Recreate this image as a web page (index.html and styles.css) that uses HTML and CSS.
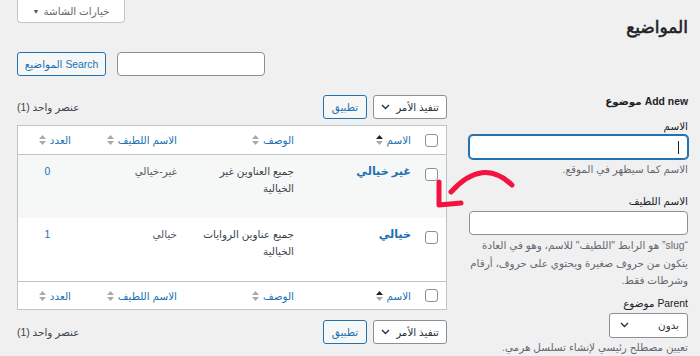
FILE: index.html
```html
<!DOCTYPE html>
<html lang="ar" dir="rtl">
<head>
<meta charset="utf-8">
<link rel="stylesheet" href="styles.css">
</head>
<body>
<div class="wrap">
  <div class="head">
    <h1 class="title">المواضيع</h1>
    <button class="screen-opt">خيارات الشاشة <span class="tri">▼</span></button>
  </div>
  <div class="search">
    <div class="input search-input"></div>
    <button class="btn search-btn">Search المواضيع</button>
  </div>
  <div class="cols">
    <div class="form-col">
      <h2 class="form-title">Add new موضوع</h2>
      <div class="label l1">الاسم</div>
      <div class="input focused"><span class="caret"></span></div>
      <p class="desc d1">الاسم كما سيظهر في الموقع.</p>
      <div class="label l2">الاسم اللطيف</div>
      <div class="input"></div>
      <p class="desc d2">“slug” هو الرابط "اللطيف" للاسم، وهو في العادة<br>يتكون من حروف صغيرة ويحتوي على حروف، أرقام<br>وشرطات فقط.</p>
      <div class="label l3">Parent موضوع</div>
      <div class="select parent-select"><span>بدون</span><svg width="9" height="6" viewBox="0 0 9 6"><path d="M1 1l3.5 3.5L8 1" fill="none" stroke="#2c3338" stroke-width="1.4"/></svg></div>
      <p class="desc d3">تعيين مصطلح رئيسي لإنشاء تسلسل هرمي.</p>
    </div>
    <div class="table-col">
      <div class="tablenav">
        <div class="select bulk"><span>تنفيذ الأمر</span><svg width="9" height="6" viewBox="0 0 9 6"><path d="M1 1l3.5 3.5L8 1" fill="none" stroke="#2c3338" stroke-width="1.4"/></svg></div>
        <button class="btn apply">تطبيق</button>
        <span class="count">عنصر واحد (1)</span>
      </div>
      <table class="list">
        <colgroup><col class="c-cb"><col class="c-name"><col class="c-desc"><col class="c-slug"><col class="c-num"></colgroup>
        <thead>
          <tr>
            <th class="cbcell"><span class="cb"></span></th>
            <th><span class="sortable">الاسم<svg class="sort" width="7" height="12" viewBox="0 0 7 12"><path d="M3.5 1L7 5H0z" fill="#1d2327"/><path d="M0 7h7l-3.5 4z" fill="#a7aaad"/></svg></span></th>
            <th><span class="sortable">الوصف<svg class="sort" width="7" height="12" viewBox="0 0 7 12"><path d="M3.5 1L7 5H0z" fill="#a7aaad"/><path d="M0 7h7l-3.5 4z" fill="#a7aaad"/></svg></span></th>
            <th><span class="sortable">الاسم اللطيف<svg class="sort" width="7" height="12" viewBox="0 0 7 12"><path d="M3.5 1L7 5H0z" fill="#a7aaad"/><path d="M0 7h7l-3.5 4z" fill="#a7aaad"/></svg></span></th>
            <th><span class="sortable">العدد<svg class="sort" width="7" height="12" viewBox="0 0 7 12"><path d="M3.5 1L7 5H0z" fill="#a7aaad"/><path d="M0 7h7l-3.5 4z" fill="#a7aaad"/></svg></span></th>
          </tr>
        </thead>
        <tbody>
          <tr class="alt">
            <td class="cbcell"><span class="cb"></span></td>
            <td><a class="row-title">غير خيالي</a></td>
            <td class="dcell">جميع العناوين غير<br>الخيالية</td>
            <td class="slug">غير-خيالي</td>
            <td class="num">0</td>
          </tr>
          <tr>
            <td class="cbcell"><span class="cb"></span></td>
            <td><a class="row-title">خيالي</a></td>
            <td class="dcell">جميع عناوين الروايات<br>الخيالية</td>
            <td class="slug">خيالي</td>
            <td class="num">1</td>
          </tr>
        </tbody>
        <tfoot>
          <tr>
            <th class="cbcell"><span class="cb"></span></th>
            <th><span class="sortable">الاسم<svg class="sort" width="7" height="12" viewBox="0 0 7 12"><path d="M3.5 1L7 5H0z" fill="#1d2327"/><path d="M0 7h7l-3.5 4z" fill="#a7aaad"/></svg></span></th>
            <th><span class="sortable">الوصف<svg class="sort" width="7" height="12" viewBox="0 0 7 12"><path d="M3.5 1L7 5H0z" fill="#a7aaad"/><path d="M0 7h7l-3.5 4z" fill="#a7aaad"/></svg></span></th>
            <th><span class="sortable">الاسم اللطيف<svg class="sort" width="7" height="12" viewBox="0 0 7 12"><path d="M3.5 1L7 5H0z" fill="#a7aaad"/><path d="M0 7h7l-3.5 4z" fill="#a7aaad"/></svg></span></th>
            <th><span class="sortable">العدد<svg class="sort" width="7" height="12" viewBox="0 0 7 12"><path d="M3.5 1L7 5H0z" fill="#a7aaad"/><path d="M0 7h7l-3.5 4z" fill="#a7aaad"/></svg></span></th>
          </tr>
        </tfoot>
      </table>
      <div class="tablenav bottom">
        <div class="select bulk"><span>تنفيذ الأمر</span><svg width="9" height="6" viewBox="0 0 9 6"><path d="M1 1l3.5 3.5L8 1" fill="none" stroke="#2c3338" stroke-width="1.4"/></svg></div>
        <button class="btn apply">تطبيق</button>
        <span class="count">عنصر واحد (1)</span>
      </div>
    </div>
  </div>
</div>
<svg class="annot" width="90" height="55" viewBox="0 0 90 55"><path d="M21 32Q52.5 -3 82 25" fill="none" stroke="#f2143f" stroke-width="5" stroke-linecap="round"/><path d="M9 22V45L31 43" fill="none" stroke="#f2143f" stroke-width="5" stroke-linecap="round" stroke-linejoin="round"/></svg>
</body>
</html>
```

FILE: styles.css
```css
* { box-sizing: border-box; }
html, body { margin: 0; }
body {
  background: #f0f0f1;
  font-family: "Liberation Sans", "DejaVu Sans", sans-serif;
  font-size: 10.4px;
  color: #3c434a;
  height: 356px;
  overflow: hidden;
  position: relative;
}
.wrap { padding: 0 12px 0 17px; }
.head {
  display: flex;
  justify-content: space-between;
  align-items: flex-start;
  height: 42px;
}
.title {
  margin: 14px 0 0;
  font-size: 17px;
  line-height: 28px;
  font-weight: 400;
  -webkit-text-stroke: 0.6px #1d2327;
  color: #1d2327;
}
.screen-opt {
  width: 108px;
  height: 23px;
  border: 1px solid #c3c4c7;
  border-top: 0;
  border-radius: 0 0 4px 4px;
  background: #fff;
  color: #646970;
  font-family: inherit;
  font-size: 10.4px;
  display: flex;
  align-items: center;
  justify-content: center;
  gap: 4px;
  padding: 0;
}
.tri { font-size: 7px; color: #50575e; }
.search {
  display: flex;
  justify-content: flex-end;
  gap: 11px;
  margin-top: 10px;
}
.input {
  height: 24px;
  border: 1px solid #8c8f94;
  border-radius: 4px;
  background: #fff;
}
.search-input { width: 148px; }
.btn {
  height: 24px;
  border: 1px solid #2271b1;
  border-radius: 3px;
  background: #f6f7f7;
  color: #2271b1;
  font-family: inherit;
  font-size: 10.4px;
  padding: 0 4px;
  white-space: nowrap;
}
.search-btn { width: 89px; }
.cols {
  display: flex;
  gap: 22px;
  margin-top: 12px;
}
.form-col { width: 219px; }
.table-col { width: 430px; }

.form-title {
  margin: 4px 0 0;
  font-size: 10.4px;
  line-height: 20px;
  font-weight: 700;
  color: #1d2327;
}
.label {
  color: #1d2327;
  line-height: 17px;
}
.l1 { margin-top: 6px; }
.l2 { margin-top: 14px; line-height: 18px; }
.l3 { margin-top: 5px; line-height: 18px; }
.focused {
  border-color: #2271b1;
  box-shadow: 0 0 0 1px #2271b1;
  display: flex;
  align-items: center;
  padding-right: 8px;
}
.caret {
  width: 1px;
  height: 13px;
  background: #1d2327;
}
.desc {
  margin: 2px 0 0;
  color: #646970;
  line-height: 18px;
  white-space: nowrap;
}
.d2 { line-height: 17.5px; }
.d3 { margin-top: 1px; }
.select {
  display: flex;
  justify-content: space-between;
  align-items: center;
  height: 24px;
  border: 1px solid #8c8f94;
  border-radius: 3px;
  background: #fff;
  color: #2c3338;
  padding: 0 7px;
  white-space: nowrap;
}
.parent-select { width: 79px; height: 25px; padding: 0 8px 0 10px; }

.tablenav {
  display: flex;
  align-items: center;
  gap: 6px;
  height: 24px;
  margin-top: 7px;
}
.tablenav.bottom { margin-top: 10px; }
.bulk { width: 74px; }
.apply { width: 44px; }
.count {
  margin-inline-start: auto;
  color: #3c434a;
}
.list {
  width: 430px;
  margin-top: 6px;
  border: 1px solid #c3c4c7;
  border-spacing: 0;
  background: #fff;
  table-layout: fixed;
}
.c-cb { width: 29px; }
.c-name { width: 117px; }
.c-desc { width: 117px; }
.c-slug { width: 106px; }
.c-num { width: 59px; }
.list th {
  height: 29px;
  padding: 0 6px;
  text-align: right;
  font-weight: 400;
  vertical-align: middle;
}
.list thead th { border-bottom: 1px solid #c3c4c7; }
.list tfoot th { border-top: 1px solid #c3c4c7; height: 28px; }
.sortable {
  display: inline-flex;
  align-items: center;
  gap: 4px;
  color: #2271b1;
  white-space: nowrap;
}
.cbcell { padding: 0 !important; text-align: center !important; }
.cb {
  display: inline-block;
  width: 13px;
  height: 13px;
  border: 1px solid #8c8f94;
  border-radius: 3px;
  background: #fff;
  vertical-align: middle;
}
.list td {
  height: 63px;
  padding: 8px 6px 0;
  vertical-align: top;
  line-height: 17px;
}
.list td.cbcell { padding-top: 10px !important; }
.alt td { background: #f6f7f7; }
.row-title {
  color: #2271b1;
  font-weight: 700;
  font-size: 11.2px;
}
.dcell { color: #3c434a; }
.slug { color: #50575e; }
.num { text-align: center; color: #2271b1; }
.annot {
  position: absolute;
  left: 430px;
  top: 160px;
  pointer-events: none;
}
```
